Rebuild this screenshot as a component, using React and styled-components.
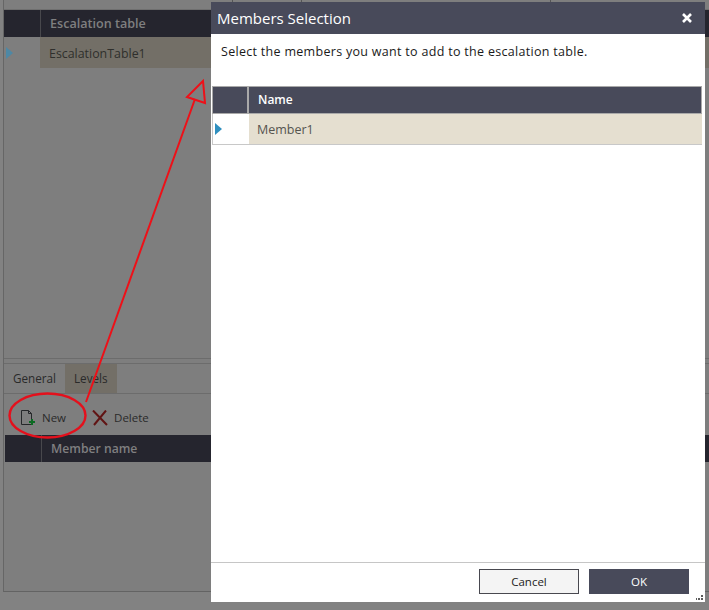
import React from 'react';
import styled, { createGlobalStyle } from 'styled-components';

const GlobalStyle = createGlobalStyle`
  html, body {
    margin: 0;
    padding: 0;
    background: #808080;
  }
  * {
    box-sizing: border-box;
  }
`;

function RowArrow() {
  return (
    <svg width="7" height="12" viewBox="0 0 7 12">
      <path d="M0 0 L7 6 L0 12 Z" fill="#2f8fbf" />
    </svg>
  );
}

function NewIcon() {
  return (
    <svg width="16" height="16" viewBox="0 0 16 16" fill="none">
      <path d="M1.5 0.5 H8.5 L11.5 3.5 V14.5 H1.5 Z M8.5 0.5 V3.5 H11.5" stroke="#26282a" strokeWidth="1" />
      <path d="M12 9 V15 M9 12 H15" stroke="#0b6a22" strokeWidth="2" />
    </svg>
  );
}

function DeleteIcon() {
  return (
    <svg width="16" height="16" viewBox="0 0 16 16" fill="none">
      <path d="M1 0.5 L15 15 M14 0.5 L2 15" stroke="#611414" strokeWidth="2" />
    </svg>
  );
}

function CloseIcon() {
  return (
    <svg width="10" height="10" viewBox="0 0 10 10">
      <path d="M1 1 L9 9 M9 1 L1 9" stroke="#ffffff" strokeWidth="2.6" />
    </svg>
  );
}

function ResizeGrip() {
  return (
    <GripSvg width="8" height="6" viewBox="0 0 8 6" fill="#5c5c5c">
      <rect x="5" y="0" width="2" height="2" />
      <rect x="2" y="3" width="2" height="2" />
      <rect x="5" y="3" width="2" height="2" />
      <rect x="0" y="3" width="1" height="2" />
    </GripSvg>
  );
}

function Annotation() {
  return (
    <AnnotationLayer width="709" height="610" viewBox="0 0 709 610" fill="none">
      <ellipse cx="47.5" cy="415.5" rx="38" ry="22" stroke="#e4101c" strokeWidth="2.4" />
      <path d="M86 402 L195 99" stroke="#ee1018" strokeWidth="2" />
      <path d="M203 81 L187 97 L205 103 Z" stroke="#ee1018" strokeWidth="2" />
    </AnnotationLayer>
  );
}

function App() {
  return (
    <>
      <GlobalStyle />
      <Page>
        <Background>
          <TopStrip>
            <TopColumn $width={229} />
            <TopColumn $width={69} />
            <TopColumn $width={249} />
          </TopStrip>
          <MainGrid>
            <DarkHeader>
              <DarkCorner />
              <DarkTitle>Escalation table</DarkTitle>
            </DarkHeader>
            <DarkRow>
              <DarkMarker><RowArrow /></DarkMarker>
              <DarkCell>EscalationTable1</DarkCell>
            </DarkRow>
          </MainGrid>
          <BottomPane>
            <Tabs>
              <Tab>General</Tab>
              <Tab $active>Levels</Tab>
            </Tabs>
            <Toolbar>
              <ToolButton><NewIcon />New</ToolButton>
              <ToolButton><DeleteIcon />Delete</ToolButton>
            </Toolbar>
            <DarkHeader $inset>
              <DarkCorner />
              <DarkTitle $small>Member name</DarkTitle>
            </DarkHeader>
          </BottomPane>
        </Background>

        <Dialog>
          <DialogHeader>
            Members Selection
            <CloseIcon />
          </DialogHeader>
          <DialogBody>
            <Instruction>Select the members you want to add to the escalation table.</Instruction>
            <Table>
              <HeaderRow>
                <HeaderCorner />
                <HeaderName>Name</HeaderName>
              </HeaderRow>
              <MemberRow>
                <MemberMarker><RowArrow /></MemberMarker>
                <MemberName>Member1</MemberName>
              </MemberRow>
            </Table>
          </DialogBody>
          <DialogFooter>
            <CancelButton>Cancel</CancelButton>
            <OkButton>OK</OkButton>
          </DialogFooter>
          <ResizeGrip />
        </Dialog>

        <Annotation />
      </Page>
    </>
  );
}

const Page = styled.div`
  position: relative;
  width: 709px;
  height: 610px;
  overflow: hidden;
  background: #828282;
  font-family: 'Open Sans', 'Noto Sans', sans-serif;
`;

const Background = styled.div`
  display: flex;
  flex-direction: column;
  height: 592px;
  margin-left: 3px;
  background: #7e7e7e;
  border-left: 1px solid #666666;
  border-bottom: 1px solid #636363;
`;

const TopStrip = styled.div`
  display: flex;
  height: 10px;
  border-bottom: 1px solid #6f6f6f;
`;

const TopColumn = styled.div`
  width: ${(p) => p.$width}px;
  border-right: 1px solid #555555;
`;

const MainGrid = styled.div`
  height: 349px;
  border-bottom: 1px solid #6c6c6c;
`;

const DarkHeader = styled.div`
  display: flex;
  height: 27px;
  margin-left: ${(p) => (p.$inset ? '1px' : '0')};
  background: #25252e;
`;

const DarkCorner = styled.div`
  width: 37px;
  border-right: 1px solid #48484c;
`;

const DarkTitle = styled.div`
  padding-left: 9px;
  font-size: ${(p) => (p.$small ? '12.2px' : '12.6px')};
  font-weight: 600;
  line-height: 27px;
  color: #7f7f80;
`;

const DarkRow = styled.div`
  display: flex;
  height: 31px;
`;

const DarkMarker = styled.div`
  display: flex;
  align-items: center;
  width: 36px;
  padding-left: 2px;
  opacity: 0.6;
`;

const DarkCell = styled.div`
  flex: 1;
  padding-left: 9px;
  font-size: 12.4px;
  line-height: 33px;
  color: #2f2f2c;
  background: #736f67;
`;

const BottomPane = styled.div`
  flex: 1;
  padding-top: 4px;
`;

const Tabs = styled.div`
  display: flex;
  height: 31px;
  border-top: 1px solid #6c6c6c;
  border-bottom: 1px solid #6c6c6c;
`;

const Tab = styled.div`
  padding: 0 9px;
  font-size: 11.7px;
  line-height: 29px;
  color: #2a2a2a;
  background: ${(p) => (p.$active ? '#736f67' : 'transparent')};
`;

const Toolbar = styled.div`
  display: flex;
  align-items: center;
  gap: 26px;
  height: 41px;
  padding: 6px 0 0 16px;
`;

const ToolButton = styled.div`
  display: flex;
  align-items: center;
  gap: 6px;
  font-size: 11.5px;
  color: #2a2a2a;
`;

const Dialog = styled.div`
  position: absolute;
  top: 2px;
  left: 211px;
  display: flex;
  flex-direction: column;
  width: 494px;
  height: 600px;
  background: #ffffff;
`;

const DialogHeader = styled.div`
  display: flex;
  align-items: center;
  justify-content: space-between;
  height: 32px;
  padding: 0 13px 0 6px;
  font-size: 15px;
  color: #ffffff;
  background: #484a5a;
`;

const DialogBody = styled.div`
  flex: 1;
  display: flex;
  flex-direction: column;
`;

const Instruction = styled.div`
  height: 52px;
  padding: 9px 0 0 10px;
  font-size: 12.5px;
  letter-spacing: 0.3px;
  color: #1a1a1a;
`;

const Table = styled.div`
  display: flex;
  flex-direction: column;
  margin-left: 1px;
  width: 490px;
`;

const HeaderRow = styled.div`
  display: flex;
  height: 28px;
  background: #484a5a;
  border: 1px solid #a9a9a9;
  color: #ffffff;
`;

const HeaderCorner = styled.div`
  width: 36px;
  border-right: 2px solid #a9a9a9;
`;

const HeaderName = styled.div`
  padding-left: 9px;
  font-size: 12px;
  font-weight: 600;
  line-height: 26px;
`;

const MemberRow = styled.div`
  display: flex;
  height: 31px;
  border-bottom: 1px solid #c8c8c8;
`;

const MemberMarker = styled.div`
  display: flex;
  align-items: center;
  width: 37px;
  padding-left: 2px;
  background: #ffffff;
  border-left: 1px solid #c8c8c8;
`;

const MemberName = styled.div`
  flex: 1;
  padding-left: 8px;
  font-size: 12.5px;
  line-height: 31px;
  color: #55544f;
  background: #e5dfd0;
`;

const DialogFooter = styled.div`
  display: flex;
  gap: 10px;
  justify-content: flex-end;
  align-items: flex-start;
  height: 40px;
  padding: 6px 16px 0 0;
  border-top: 1px solid #c6c6c6;
`;

const CancelButton = styled.button`
  width: 100px;
  height: 25px;
  padding: 0;
  font-family: inherit;
  font-size: 11.5px;
  color: #222222;
  background: #f4f4f4;
  border: 1px solid #48484f;
`;

const OkButton = styled.button`
  width: 100px;
  height: 25px;
  padding: 0;
  font-family: inherit;
  font-size: 11.5px;
  color: #ffffff;
  background: #484a5a;
  border: none;
`;

const GripSvg = styled.svg`
  position: absolute;
  right: 1px;
  bottom: 1px;
`;

const AnnotationLayer = styled.svg`
  position: absolute;
  top: 0;
  left: 0;
  pointer-events: none;
`;

export default App;
